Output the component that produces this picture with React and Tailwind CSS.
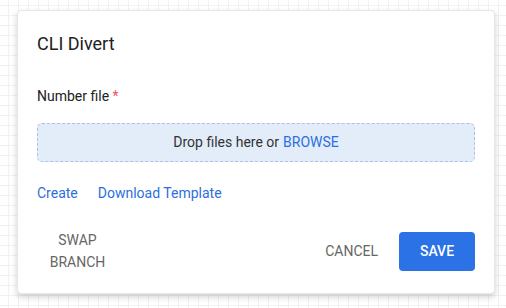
import React from 'react';

// Dialog: CLI Divert upload form
const App = () => {
    return (
        <div
            className="w-[506px] h-[308px] pt-[10px] pl-[17px] bg-white bg-[linear-gradient(to_right,#f1f1f1_1px,transparent_1px),linear-gradient(to_bottom,#f1f1f1_1px,transparent_1px)] bg-[size:10px_10px] bg-[position:8px_5px]"
            style={{ fontFamily: 'Roboto, "Liberation Sans", sans-serif' }}
        >
            <div className="w-[478px] h-[284px] bg-white rounded-[4px] border border-[#e6e6e6] shadow-[0_3px_6px_rgba(0,0,0,0.18)] px-[19px] pt-[19px] flex flex-col">
                <h1 className="text-[18px] leading-7 text-[#212121]">CLI Divert</h1>

                <label className="mt-[28px] text-[14px] leading-5 text-[#212121]">
                    Number file <span className="text-[#f0506e]">*</span>
                </label>

                <div className="mt-[17px] h-[39px] rounded-[5px] border border-dashed border-[#a9c3e6] bg-[#e3edfa] flex items-center justify-center text-[14px] text-[#333]">
                    Drop files here or <span className="ml-1 text-[#2c6fe0]">BROWSE</span>
                </div>

                <div className="mt-[21px] flex gap-[20px] text-[14px] leading-5 text-[#2c6fe0]">
                    <a className="cursor-pointer">Create</a>
                    <a className="cursor-pointer">Download Template</a>
                </div>

                <div className="mt-auto mb-[20px] flex items-center">
                    <button className="w-[81px] text-center text-[14px] leading-[22px] uppercase text-[#666]">
                        Swap<br />Branch
                    </button>
                    <div className="ml-auto flex items-center gap-[21px]">
                        <button className="text-[14px] uppercase text-[#666]">Cancel</button>
                        <button className="w-[76px] h-[39px] rounded-[4px] bg-[#2a72e6] text-white text-[14px] font-medium uppercase">
                            Save
                        </button>
                    </div>
                </div>
            </div>
        </div>
    );
};

export default App;
